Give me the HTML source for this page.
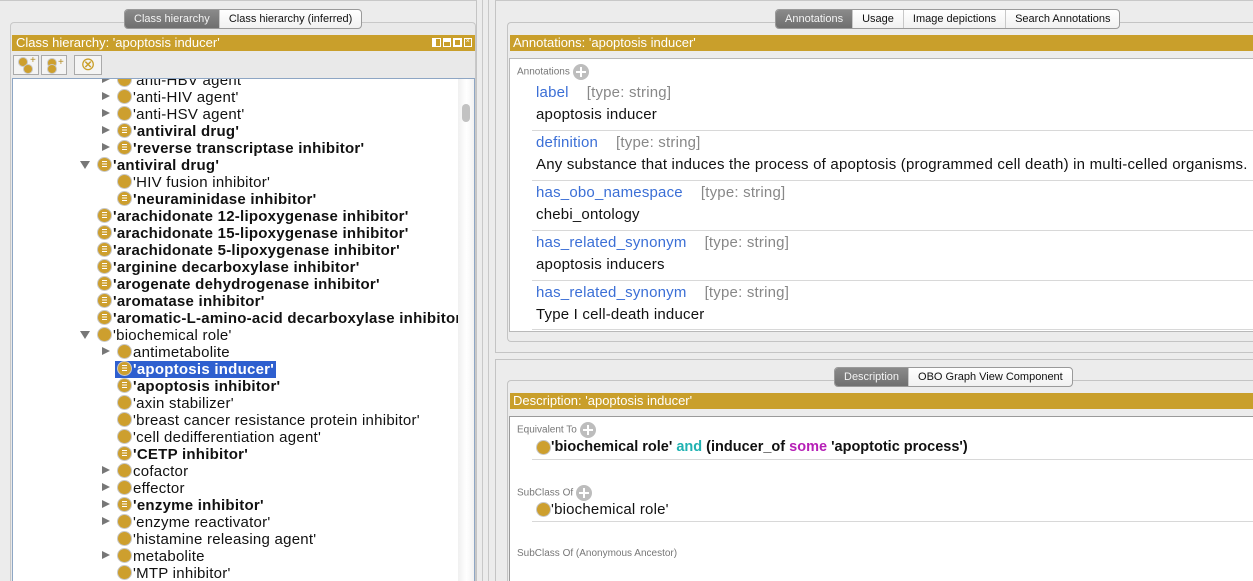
<!DOCTYPE html>
<html><head><meta charset="utf-8"><style>
*{margin:0;padding:0;box-sizing:border-box}
html,body{width:1253px;height:581px;overflow:hidden}
body{background:#ececec;font-family:"Liberation Sans",sans-serif;position:relative}
.a{position:absolute}
.gold{background:#c99f2b;color:#fff;font-size:13px;line-height:16px;padding-left:4px;white-space:nowrap}
.tabs{position:absolute;height:20px;border:1px solid #9a9a9a;border-radius:4px;background:linear-gradient(#fff,#f1f1f1);display:flex;font-size:11px;overflow:hidden}
.tabs span{padding:0 9px;line-height:18px;border-right:1px solid #c8c8c8;color:#111}
.tabs span.on{background:linear-gradient(#8a8a8a,#6f6f6f);color:#f4f4f4}
.tabs span:last-child{border-right:0}
.row{position:absolute;height:17px;font-size:15px;letter-spacing:0.25px;line-height:17px;white-space:nowrap;color:#111}
.ic{position:absolute;width:13px;height:13px;border-radius:50%;background:#cd9f2e;box-shadow:0 0 0 1px #c8c8c8;top:2px}
.ic.e::after{content:"";position:absolute;left:4px;top:3px;width:5px;height:6px;background:repeating-linear-gradient(#fff 0 1px,transparent 1px 2.5px)}
.ar{position:absolute;top:4px;width:0;height:0}
.ar.r{border-left:8px solid #777;border-top:4.5px solid transparent;border-bottom:4.5px solid transparent}
.ar.d{border-top:8px solid #777;border-left:5px solid transparent;border-right:5px solid transparent;top:5px}
.b{font-weight:bold}
.lab{position:absolute;font-size:15px;letter-spacing:0.2px;color:#3b6fd6;white-space:nowrap}
.lab i{font-style:normal;color:#888;margin-left:18px}
.val{position:absolute;font-size:15px;letter-spacing:0.2px;color:#111;white-space:nowrap}
.sep{position:absolute;height:1px;background:#d8d8d8}
.sm{position:absolute;font-size:10px;color:#777;white-space:nowrap}
.plus{display:inline-block;width:16px;height:16px;border-radius:50%;background:#bdbdbd;position:relative;vertical-align:middle;margin-left:3px}
.plus::before{content:"";position:absolute;left:3px;top:7px;width:10px;height:2px;background:#fff}
.plus::after{content:"";position:absolute;left:7px;top:3px;width:2px;height:10px;background:#fff}
</style></head><body>
<div class="a" style="left:0;top:0;width:477px;height:581px;border-right:1px solid #c4c4c4;border-top:1px solid #c8c8c8"></div>
<div class="a" style="left:482px;top:0;width:1px;height:581px;background:#c8c8c8"></div>
<div class="a" style="left:488px;top:0;width:1px;height:581px;background:#c8c8c8"></div>
<div class="a" style="left:10px;top:22px;width:466px;height:559px;border:1px solid #c8c8c8;border-bottom:0;border-radius:4px 4px 0 0;background:#e9e9e9"></div>
<div class="tabs" style="left:124px;top:9px"><span class="on">Class hierarchy</span><span>Class hierarchy (inferred)</span></div>
<div class="a gold" style="left:12px;top:35px;width:463px;height:16px">Class hierarchy: 'apoptosis inducer'</div>
<div class="a" style="left:432px;top:38px;width:40px;height:10px;display:flex;gap:2px">
<div style="width:9px;height:9px;border:1.5px solid #fff;border-left-width:4px"></div><div style="width:9px;height:9px;border:1.5px solid #fff;border-top-width:4px"></div><div style="width:9px;height:9px;border:2.5px solid #fff"></div><div style="width:9px;height:9px;border:1.5px solid #fff;font-size:7px;color:#fff;line-height:6px;text-align:center">×</div></div>
<div class="a" style="left:13px;top:55px;width:26px;height:20px;border:1px solid #aaa;background:#f4f4f4"><div class="ic" style="left:5px;top:2px;width:8px;height:8px"></div><div class="ic" style="left:10px;top:9px;width:8px;height:8px"></div><span style="position:absolute;left:16px;top:-1px;font-size:10px;color:#b38b20">+</span></div>
<div class="a" style="left:41px;top:55px;width:26px;height:20px;border:1px solid #aaa;background:#f4f4f4"><div class="ic" style="left:6px;top:3px;width:8px;height:8px"></div><div class="ic" style="left:6px;top:9px;width:8px;height:8px"></div><span style="position:absolute;left:16px;top:1px;font-size:10px;color:#b38b20">+</span></div>
<div class="a" style="left:74px;top:55px;width:28px;height:20px;border:1px solid #aaa;background:#f4f4f4;color:#c99f2b;font-size:18px;line-height:17px;text-align:center">⊗</div>
<div class="a" style="left:12px;top:78px;width:463px;height:503px;border:1px solid #8ea6c4;border-bottom:0;background:#fff;overflow:hidden">
<div id="tree" class="a" style="left:-12px;top:-78px;width:470px;height:581px"></div>
<div class="a" style="left:445px;top:0;width:17px;height:503px;background:linear-gradient(90deg,#f0f0f0,#fff,#f0f0f0)"></div>
<div class="a" style="left:449px;top:25px;width:8px;height:18px;border-radius:4px;background:#c2c2c2"></div>
</div>
<div class="a" style="left:495px;top:0;width:758px;height:353px;border:1px solid #c4c4c4;border-right:0;border-top:1px solid #c8c8c8"></div>
<div class="a" style="left:507px;top:22px;width:746px;height:320px;border:1px solid #c4c4c4;border-right:0;border-radius:4px 0 0 4px"></div>
<div class="tabs" style="left:775px;top:9px"><span class="on">Annotations</span><span>Usage</span><span>Image depictions</span><span>Search Annotations</span></div>
<div class="a gold" style="left:510px;top:35px;width:743px;height:16px;padding-left:3px">Annotations: 'apoptosis inducer'</div>
<div class="a" style="left:509px;top:58px;width:744px;height:274px;border:1px solid #b9b9b9;border-right:0;background:#fff"></div>
<div class="sm" style="left:517px;top:64px">Annotations<span class="plus"></span></div>
<div class="lab" style="left:536px;top:84px">label<i>[type: string]</i></div>
<div class="val" style="left:536px;top:106px">apoptosis inducer</div>
<div class="sep" style="left:532px;top:130px;width:721px"></div>
<div class="lab" style="left:536px;top:134px">definition<i>[type: string]</i></div>
<div class="val" style="left:536px;top:156px">Any substance that induces the process of apoptosis (programmed cell death) in multi-celled organisms.</div>
<div class="sep" style="left:532px;top:180px;width:721px"></div>
<div class="lab" style="left:536px;top:184px">has_obo_namespace<i>[type: string]</i></div>
<div class="val" style="left:536px;top:206px">chebi_ontology</div>
<div class="sep" style="left:532px;top:230px;width:721px"></div>
<div class="lab" style="left:536px;top:234px">has_related_synonym<i>[type: string]</i></div>
<div class="val" style="left:536px;top:256px">apoptosis inducers</div>
<div class="sep" style="left:532px;top:280px;width:721px"></div>
<div class="lab" style="left:536px;top:284px">has_related_synonym<i>[type: string]</i></div>
<div class="val" style="left:536px;top:306px">Type I cell-death inducer</div>
<div class="sep" style="left:532px;top:329px;width:721px"></div>

<div class="a" style="left:495px;top:359px;width:758px;height:222px;border:1px solid #c4c4c4;border-right:0;border-bottom:0"></div>
<div class="a" style="left:507px;top:380px;width:746px;height:201px;border:1px solid #c4c4c4;border-right:0;border-bottom:0;border-radius:4px 0 0 0"></div>
<div class="tabs" style="left:834px;top:367px"><span class="on">Description</span><span>OBO Graph View Component</span></div>
<div class="a gold" style="left:510px;top:393px;width:743px;height:16px;padding-left:3px">Description: 'apoptosis inducer'</div>
<div class="a" style="left:509px;top:416px;width:744px;height:165px;border:1px solid #9a9a9a;border-right:0;border-bottom:0;background:#fff"></div>
<div class="sm" style="left:517px;top:422px">Equivalent To<span class="plus"></span></div>
<div class="ic" style="left:537px;top:441px"></div>
<div class="val b" style="left:551px;top:439px;font-weight:bold;font-size:14.5px;letter-spacing:0">'biochemical role' <span style="color:#1fb2b2">and</span> (inducer_of <span style="color:#b61fb6">some</span> 'apoptotic process')</div>
<div class="sep" style="left:532px;top:459px;width:721px"></div>
<div class="sm" style="left:517px;top:485px">SubClass Of<span class="plus"></span></div>
<div class="ic" style="left:537px;top:503px"></div>
<div class="val" style="left:551px;top:501px">'biochemical role'</div>
<div class="sep" style="left:532px;top:521px;width:721px"></div>
<div class="sm" style="left:517px;top:548px">SubClass Of (Anonymous Ancestor)</div>

<script>
var rows=[
[2,1,0,0,"'anti-HBV agent'"],[2,1,0,0,"'anti-HIV agent'"],[2,1,0,0,"'anti-HSV agent'"],[2,1,1,1,"'antiviral drug'"],[2,1,1,1,"'reverse transcriptase inhibitor'"],
[1,2,1,1,"'antiviral drug'"],[2,0,0,0,"'HIV fusion inhibitor'"],[2,0,1,1,"'neuraminidase inhibitor'"],
[1,0,1,1,"'arachidonate 12-lipoxygenase inhibitor'"],[1,0,1,1,"'arachidonate 15-lipoxygenase inhibitor'"],[1,0,1,1,"'arachidonate 5-lipoxygenase inhibitor'"],[1,0,1,1,"'arginine decarboxylase inhibitor'"],[1,0,1,1,"'arogenate dehydrogenase inhibitor'"],[1,0,1,1,"'aromatase inhibitor'"],[1,0,1,1,"'aromatic-L-amino-acid decarboxylase inhibitor'"],
[1,2,0,0,"'biochemical role'"],[2,1,0,0,"antimetabolite"],[2,0,1,1,"'apoptosis inducer'",1],[2,0,1,1,"'apoptosis inhibitor'"],[2,0,0,0,"'axin stabilizer'"],[2,0,0,0,"'breast cancer resistance protein inhibitor'"],[2,0,0,0,"'cell dedifferentiation agent'"],[2,0,1,1,"'CETP inhibitor'"],[2,1,0,0,"cofactor"],[2,1,0,0,"effector"],[2,1,1,1,"'enzyme inhibitor'"],[2,1,0,0,"'enzyme reactivator'"],[2,0,0,0,"'histamine releasing agent'"],[2,1,0,0,"metabolite"],[2,0,0,0,"'MTP inhibitor'"]];
var h="";
rows.forEach(function(r,i){
 var top=70+i*17, ix=r[0]==2?117:97, ax=ix-17;
 var s='<div class="row" style="left:0;top:'+top+'px;width:470px">';
 if(r[1]==1) s+='<div class="ar r" style="left:'+(ax+1)+'px"></div>';
 if(r[1]==2) s+='<div class="ar d" style="left:'+(ax-1)+'px"></div>';
 if(r[5]) s+='<span style="position:absolute;left:'+(ix-3)+'px;top:1px;height:17px;padding:0 2px 0 18px;background:#2e5fcf;font-weight:bold;color:transparent">'+r[4]+'</span>';
 s+='<div class="ic'+(r[2]?' e':'')+'" style="left:'+ix+'px"></div>';
 s+='<span style="position:absolute;left:'+(ix+15)+'px;top:1px;'+(r[3]?'font-weight:bold;':'')+(r[5]?'color:#fff;':'')+'">'+r[4]+'</span></div>';
 h+=s;});
document.getElementById('tree').innerHTML=h;
</script>
</body></html>
